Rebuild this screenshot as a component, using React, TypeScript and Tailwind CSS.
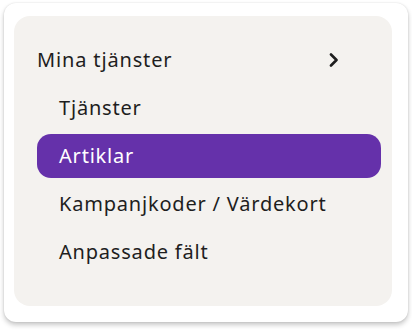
import { useState } from 'react';

const items = ['Tjänster', 'Artiklar', 'Kampanjkoder / Värdekort', 'Anpassade fält'];

export default function App() {
  const [active, setActive] = useState('Artiklar');

  return (
    <div className="min-h-screen bg-white pt-[3px] px-1 font-['Noto_Sans',sans-serif]">
      <div className="w-[404px] rounded-xl bg-white pl-[10px] pr-4 pt-[13px] pb-4 shadow-[0_3px_5px_rgba(0,0,0,0.22),0_0_2px_rgba(0,0,0,0.12)]">
        <nav className="rounded-2xl bg-[#f4f2ef] pl-[23px] pr-[11px] pt-[22px] pb-8">
          <button className="flex h-11 w-full items-center justify-between pr-[42px] text-left text-[20px] tracking-[0.85px] text-[#1e1e1e]">
            <span>Mina tjänster</span>
            <svg width="10" height="14" viewBox="0 0 10 14" fill="none" stroke="currentColor" strokeWidth="2.6" strokeLinecap="round" strokeLinejoin="round">
              <path d="M2 1.5 7.5 7 2 12.5" />
            </svg>
          </button>
          <ul className="mt-1 flex flex-col gap-1">
            {items.map((item) => (
              <li key={item}>
                <button
                  onClick={() => setActive(item)}
                  className={`flex h-11 w-full items-center rounded-[14px] px-[22px] text-left text-[20px] tracking-[0.8px] ${
                    active === item ? 'bg-[#6531aa] text-white' : 'text-[#1e1e1e]'
                  }`}
                >
                  {item}
                </button>
              </li>
            ))}
          </ul>
        </nav>
      </div>
    </div>
  );
}
